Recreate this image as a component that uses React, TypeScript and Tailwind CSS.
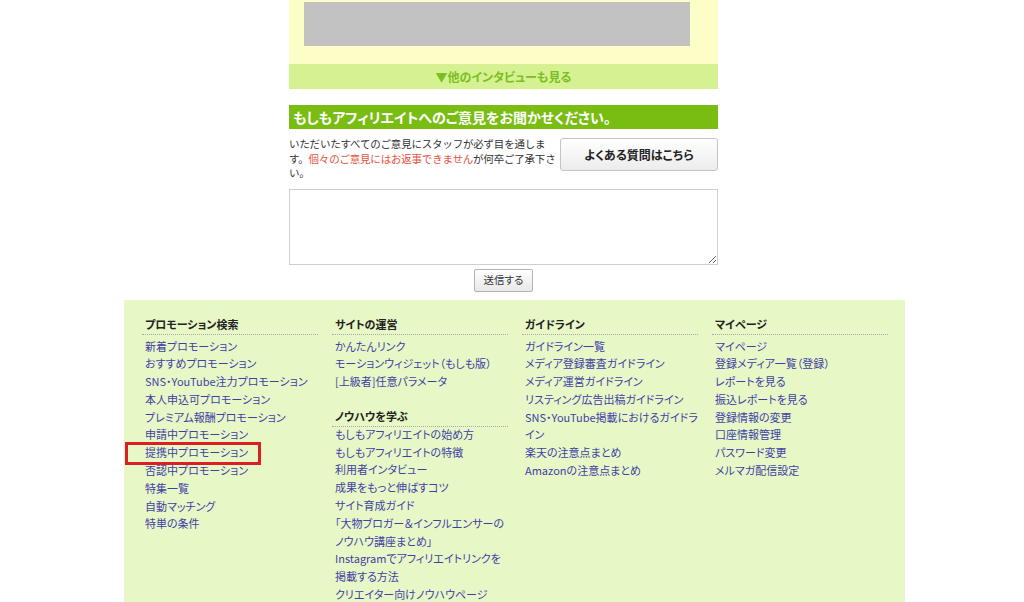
const font = { fontFamily: '"Noto Sans CJK JP", "Liberation Sans", sans-serif' }

const promotion = [
  '新着プロモーション',
  'おすすめプロモーション',
  'SNS・YouTube注力プロモーション',
  '本人申込可プロモーション',
  'プレミアム報酬プロモーション',
  '申請中プロモーション',
  '提携中プロモーション',
  '否認中プロモーション',
  '特集一覧',
  '自動マッチング',
  '特単の条件',
]

const site = ['かんたんリンク', 'モーションウィジェット（もしも版）', '[上級者]任意パラメータ']

const knowhow = [
  'もしもアフィリエイトの始め方',
  'もしもアフィリエイトの特徴',
  '利用者インタビュー',
  '成果をもっと伸ばすコツ',
  'サイト育成ガイド',
  '「大物ブロガー＆インフルエンサーのノウハウ講座まとめ」',
  'Instagramでアフィリエイトリンクを掲載する方法',
  'クリエイター向けノウハウページ',
]

const guide = [
  'ガイドライン一覧',
  'メディア登録審査ガイドライン',
  'メディア運営ガイドライン',
  'リスティング広告出稿ガイドライン',
  'SNS・YouTube掲載におけるガイドライン',
  '楽天の注意点まとめ',
  'Amazonの注意点まとめ',
]

const mypage = [
  'マイページ',
  '登録メディア一覧（登録）',
  'レポートを見る',
  '振込レポートを見る',
  '登録情報の変更',
  '口座情報管理',
  'パスワード変更',
  'メルマガ配信設定',
]

function Heading({ children }: { children: string }) {
  return (
    <h4 className="mb-[3px] border-b border-dotted border-[#a9a9a9] pb-[1px] pl-[3px] text-[11px] font-bold leading-[17px] text-[#222]">
      {children}
    </h4>
  )
}

function Links({ items, mark }: { items: string[]; mark?: string }) {
  return (
    <ul className="pl-[3px] text-[11px] leading-[17.8px] text-[#3f3fa6]">
      {items.map((t) => (
        <li key={t} className="relative">
          {t}
          {t === mark && (
            <span className="absolute left-[-20px] top-[-2px] h-[23px] w-[136px] border-[3px] border-[#dc1f26]" />
          )}
        </li>
      ))}
    </ul>
  )
}

export default function App() {
  return (
    <div className="h-[602px] w-[1024px] overflow-hidden bg-white [font-feature-settings:'palt']" style={font}>
      <div className="ml-[289px] w-[429px]">
        <div className="h-[64px] bg-[#fdfdc8] pl-[15px] pr-[28px] pt-[2px]">
          <div className="h-[44px] bg-[#c2c2c2]" />
        </div>
        <div className="flex h-[25px] items-center justify-center bg-[#d5f192] text-[12px] font-bold text-[#7cbf22]">
          ▼他のインタビューも見る
        </div>
        <h3 className="mt-[16px] flex h-[24px] items-center bg-[#79bd12] pl-[4px] text-[14px] font-bold text-white">
          もしもアフィリエイトへのご意見をお聞かせください。
        </h3>
        <div className="mt-[8px] flex justify-between">
          <p className="w-[268px] text-[10.5px] leading-[14.5px] tracking-[-0.2px] text-[#333] [font-feature-settings:normal]">
            いただいたすべてのご意見にスタッフが必ず目を通します。
            <span className="text-[#e5533d]">個々のご意見にはお返事できません</span>が何卒ご了承下さい。
          </p>
          <button className="mt-[1px] h-[33px] w-[158px] shrink-0 rounded-[3px] border border-[#c4c4c4] bg-gradient-to-b from-white to-[#ececec] text-[12px] font-bold text-[#222]">
            よくある質問はこちら
          </button>
        </div>
        <textarea className="mt-[8px] block h-[76px] w-full resize-y border border-[#cfcfcf] bg-white" />
        <div className="mt-[4px] flex justify-center">
          <button className="h-[23px] w-[59px] rounded-[2px] border border-[#b3b3b3] bg-gradient-to-b from-white to-[#e8e8e8] text-[10.5px] text-[#333]">
            送信する
          </button>
        </div>
      </div>
      <div className="ml-[124px] mt-[8px] h-[310px] w-[781px] bg-[#e7f7c6] pl-[18px] pt-[16px]">
        <div className="grid grid-cols-[176px_176px_176px_176px] gap-x-[14px]">
          <div>
            <Heading>プロモーション検索</Heading>
            <Links items={promotion} mark="提携中プロモーション" />
          </div>
          <div>
            <Heading>サイトの運営</Heading>
            <Links items={site} />
            <div className="mt-[17px]">
              <Heading>ノウハウを学ぶ</Heading>
              <div className="-mt-[4px]">
                <Links items={knowhow} />
              </div>
            </div>
          </div>
          <div>
            <Heading>ガイドライン</Heading>
            <Links items={guide} />
          </div>
          <div>
            <Heading>マイページ</Heading>
            <Links items={mypage} />
          </div>
        </div>
      </div>
    </div>
  )
}
